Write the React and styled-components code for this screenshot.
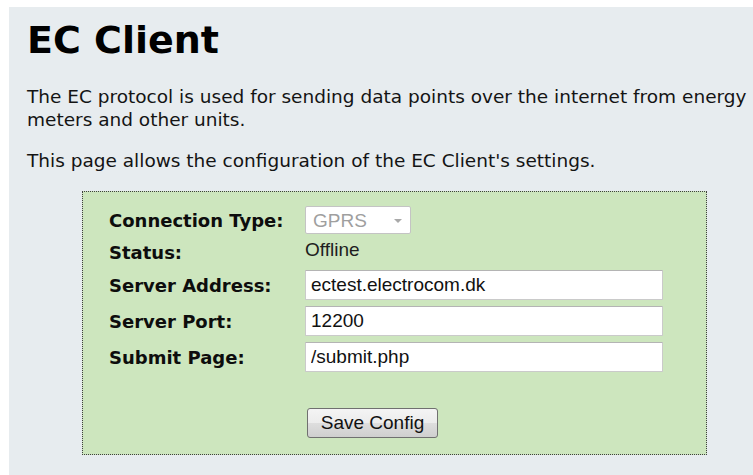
import React from "react";
import styled, { createGlobalStyle } from "styled-components";

const GlobalStyle = createGlobalStyle`
  html, body {
    margin: 0;
    padding: 0;
    background: #ffffff;
  }
  body {
    font-family: "DejaVu Sans", Verdana, sans-serif;
  }
`;

const Page = styled.div`
  margin: 7px 0 0 9px;
  height: 468px;
  padding: 11px 0 0 18px;
  box-sizing: border-box;
  overflow: hidden;
  background: #e7ecef;
  color: #141414;
`;

const Title = styled.h1`
  margin: 0 0 24px;
  font-size: 38px;
  line-height: 44px;
  font-weight: bold;
  color: #000000;
`;

const Intro = styled.p`
  margin: 0 0 18.5px;
  font-size: 18.5px;
  line-height: 22.5px;
`;

const ConfigForm = styled.form`
  width: 625px;
  height: 264px;
  margin: 19px 0 0 55px;
  padding: 14px 0 0 26px;
  box-sizing: border-box;
  border: 1px dotted #3f3f3f;
  background: #cde6be;
`;

const FieldGrid = styled.div`
  display: grid;
  grid-template-columns: 196px 358px;
  grid-template-rows: 28px 24px 30px 30px 30px;
  row-gap: 6px;
  align-items: center;
`;

const FieldLabel = styled.label`
  font-size: 18px;
  font-weight: bold;
  color: #0d0d0d;
`;

const StatusText = styled.span`
  font-family: "Liberation Sans", Arial, sans-serif;
  font-size: 19px;
  color: #1e1e1e;
  margin-top: ${(p) => p.$lift || 0}px;
`;

const SelectWrap = styled.div`
  position: relative;
  width: 106px;
  height: 28px;

  &::after {
    content: "";
    position: absolute;
    right: 9px;
    top: 13px;
    border-left: 4px solid transparent;
    border-right: 4px solid transparent;
    border-top: 4px solid #a9a9a9;
    pointer-events: none;
  }
`;

const TypeSelect = styled.select`
  appearance: none;
  width: 100%;
  height: 100%;
  box-sizing: border-box;
  padding: 0 0 0 7px;
  border: 1px solid #c4c4c4;
  border-radius: 2px;
  background: #ffffff;
  font-family: "Liberation Sans", Arial, sans-serif;
  font-size: 19px;
  color: #9f9f9f;

  &:disabled {
    opacity: 1;
    color: #9f9f9f;
    background: #ffffff;
  }
`;

const TextField = styled.input`
  width: 358px;
  height: 30px;
  box-sizing: border-box;
  padding: 0 5px;
  border: 1px solid #cacaca;
  border-top-color: #b4b4b4;
  border-radius: 1px;
  background: #ffffff;
  font-family: "Liberation Sans", Arial, sans-serif;
  font-size: 19px;
  color: #111111;
  outline: none;
`;

const SaveButton = styled.button`
  display: block;
  width: 131px;
  height: 30px;
  margin: 36px 0 0 198px;
  padding: 0;
  border: 1px solid #707070;
  border-radius: 3px;
  background: linear-gradient(#f4f4f4, #ececec 50%, #dedede 50%, #cfcfcf);
  font-family: "Liberation Sans", Arial, sans-serif;
  font-size: 19px;
  color: #111111;
  cursor: pointer;
`;

const App = () => {
  const [address, setAddress] = React.useState("ectest.electrocom.dk");
  const [port, setPort] = React.useState("12200");
  const [submitPage, setSubmitPage] = React.useState("/submit.php");

  const handleSave = (event) => {
    event.preventDefault();
  };

  return (
    <>
      <GlobalStyle />
      <Page>
        <Title>EC Client</Title>
        <Intro>
          The EC protocol is used for sending data points over the internet
          from energy meters and other units.
        </Intro>
        <Intro>This page allows the configuration of the EC Client's settings.</Intro>

        <ConfigForm onSubmit={handleSave}>
          <FieldGrid>
            <FieldLabel htmlFor="conn-type">Connection Type:</FieldLabel>
            <SelectWrap>
              <TypeSelect id="conn-type" disabled defaultValue="gprs">
                <option value="gprs">GPRS</option>
                <option value="lan">LAN</option>
              </TypeSelect>
            </SelectWrap>

            <FieldLabel>Status:</FieldLabel>
            <StatusText $lift={-5}>Offline</StatusText>

            <FieldLabel htmlFor="srv-address">Server Address:</FieldLabel>
            <TextField
              id="srv-address"
              value={address}
              onChange={(e) => setAddress(e.target.value)}
            />

            <FieldLabel htmlFor="srv-port">Server Port:</FieldLabel>
            <TextField
              id="srv-port"
              value={port}
              onChange={(e) => setPort(e.target.value)}
            />

            <FieldLabel htmlFor="submit-page">Submit Page:</FieldLabel>
            <TextField
              id="submit-page"
              value={submitPage}
              onChange={(e) => setSubmitPage(e.target.value)}
            />
          </FieldGrid>

          <SaveButton type="submit">Save Config</SaveButton>
        </ConfigForm>
      </Page>
    </>
  );
};

export default App;
